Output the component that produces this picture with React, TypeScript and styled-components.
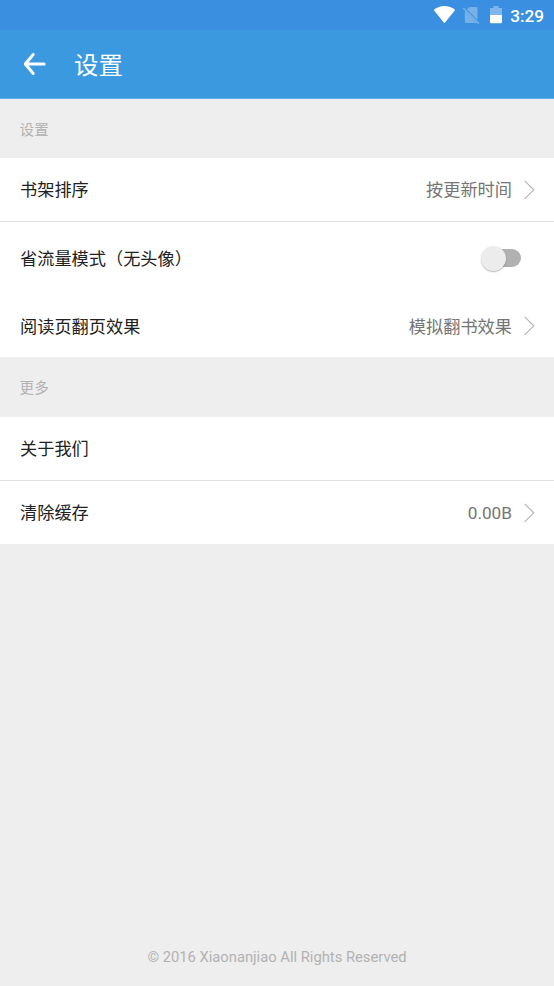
import React from 'react';
import styled, { createGlobalStyle } from 'styled-components';

const GlobalStyle = createGlobalStyle`
  * { box-sizing: border-box; }
  body { margin: 0; background: #eeeeee; }
`;

const Screen = styled.div`
  display: flex;
  flex-direction: column;
  width: 554px;
  height: 986px;
  overflow: hidden;
  background: #eeeeee;
  font-family: Roboto, 'Noto Sans CJK SC', sans-serif;
`;

const StatusBar = styled.div`
  display: flex;
  flex: none;
  align-items: center;
  justify-content: flex-end;
  height: 30px;
  padding-right: 10px;
  background: #3b8fe0;
`;

const StatusIcons = styled.svg`
  display: block;
  margin-right: 8px;
`;

const Clock = styled.span`
  color: #fff;
  font-size: 17.2px;
  font-weight: 500;
  line-height: 30px;
  padding-top: 1px;
`;

const Header = styled.header`
  display: flex;
  flex: none;
  align-items: center;
  height: 69px;
  padding-left: 22px;
  background: #3b99e0;
  border-bottom: 1px solid #63aee5;
`;

const BackIcon = styled.svg`
  display: block;
  margin-right: 27px;
`;

const Title = styled.h1`
  margin: 0;
  padding-top: 3px;
  color: #fff;
  font-size: 24.4px;
  font-weight: 400;
  line-height: 36px;
`;

const SectionLabel = styled.h2<{ $height: number }>`
  flex: none;
  height: ${(p) => p.$height}px;
  margin: 0;
  padding-left: 19.6px;
  color: #b2b2b2;
  font-size: 14.6px;
  font-weight: 400;
  line-height: 62px;
`;

const Row = styled.div<{ $height: number; $divided?: boolean }>`
  display: flex;
  flex: none;
  align-items: center;
  height: ${(p) => p.$height}px;
  padding: 0 19px 0 20px;
  background: #fff;
  border-bottom: ${(p) => (p.$divided ? '1px solid #e1e1e1' : 'none')};
`;

const Label = styled.span<{ $drop?: number }>`
  flex: 1;
  padding-top: ${(p) => p.$drop ?? 0}px;
  color: #212121;
  font-size: 17.2px;
  line-height: 26px;
`;

const Value = styled.span<{ $drop?: number }>`
  padding-top: ${(p) => p.$drop ?? 0}px;
  color: #757575;
  font-size: 17.2px;
  line-height: 26px;
  margin-right: 12px;
`;

const ChevronIcon = styled.svg`
  display: block;
`;

const Switch = styled.span`
  display: flex;
  align-items: center;
  width: 41px;
  height: 28px;
  margin-right: 14px;
`;

const Thumb = styled.span`
  z-index: 1;
  width: 25px;
  height: 25px;
  margin-left: 0.6px;
  border-radius: 50%;
  background: #ececec;
  box-shadow: 0 1px 1.5px rgba(0, 0, 0, 0.28);
`;

const Track = styled.span`
  width: 29.4px;
  height: 18px;
  margin-left: -14px;
  border-radius: 9px;
  background: #b1b1b1;
`;

const Footer = styled.footer`
  margin-top: auto;
  padding-bottom: 18px;
  color: #b2b2b2;
  font-size: 14.75px;
  line-height: 22px;
  text-align: center;
`;

const Chevron = () => (
  <ChevronIcon width="11" height="20" viewBox="0 0 11 20" fill="none">
    <path d="M0.7 0.8L9.7 9.8L0.7 18.8" stroke="#b5b5b5" strokeWidth="1.2" />
  </ChevronIcon>
);

export default function App() {
  return (
    <>
      <GlobalStyle />
      <Screen>
        <StatusBar>
          <StatusIcons width="70" height="30" viewBox="0 0 70 30">
            <path d="M1.7 10C8 4.7 17 4.7 23.2 10L12.4 23.3Z" fill="#fff" />
            <path d="M37.5 7H44.2Q45.5 7 45.5 8.3V20L34.8 9.3Z" fill="#76b1ea" />
            <path d="M32.8 10.6L45.3 23.1H34.2Q32.8 23.1 32.8 21.7Z" fill="#76b1ea" />
            <path d="M31.3 8L47 23.7" stroke="#76b1ea" strokeWidth="1.5" />
            <path d="M58 8H61.5V6H66.5V8H70V15H58Z" fill="#7db6ec" />
            <path d="M58 15H70V22Q70 23.3 68.7 23.3H59.3Q58 23.3 58 22Z" fill="#fff" />
          </StatusIcons>
          <Clock>3:29</Clock>
        </StatusBar>
        <Header>
          <BackIcon width="25" height="24" viewBox="0 0 25 24" fill="none">
            <path
              d="M11.2 2.5L3.3 12L11.2 21.5M3.3 12H22.1"
              stroke="#fff"
              strokeWidth="3"
              strokeLinecap="round"
              strokeLinejoin="round"
            />
          </BackIcon>
          <Title>设置</Title>
        </Header>
        <SectionLabel $height={59}>设置</SectionLabel>
        <Row $height={64} $divided>
          <Label>书架排序</Label>
          <Value>按更新时间</Value>
          <Chevron />
        </Row>
        <Row $height={72}>
          <Label $drop={2}>省流量模式（无头像）</Label>
          <Switch role="switch" aria-checked="false">
            <Thumb />
            <Track />
          </Switch>
        </Row>
        <Row $height={63}>
          <Label $drop={2}>阅读页翻页效果</Label>
          <Value $drop={2}>模拟翻书效果</Value>
          <Chevron />
        </Row>
        <SectionLabel $height={60}>更多</SectionLabel>
        <Row $height={64} $divided>
          <Label>关于我们</Label>
        </Row>
        <Row $height={63}>
          <Label>清除缓存</Label>
          <Value>0.00B</Value>
          <Chevron />
        </Row>
        <Footer>© 2016 Xiaonanjiao All Rights Reserved</Footer>
      </Screen>
    </>
  );
}
